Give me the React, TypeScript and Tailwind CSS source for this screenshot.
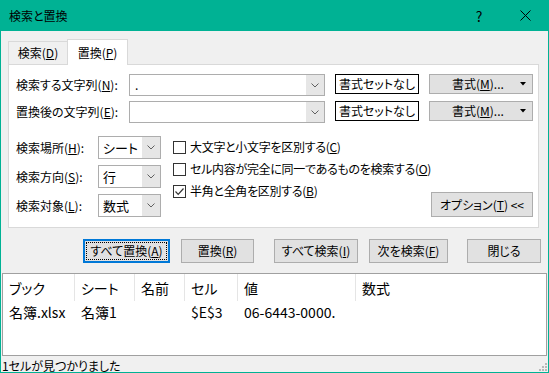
import React from "react";

const Chevron = () => (
  <svg width="8" height="5" viewBox="0 0 8 5">
    <polyline points="0.5,0.5 4,4 7.5,0.5" fill="none" stroke="#606060" strokeWidth="1" />
  </svg>
);

const Caret = () => (
  <svg width="6" height="4" viewBox="0 0 6 4">
    <polygon points="0,0 6,0 3,3.5" fill="#000" />
  </svg>
);

const Combo = ({ value }: { value: string }) => (
  <div className="w-[196px] h-[22px] border border-[#adadad] bg-white flex">
    <div className="flex-1 pl-[5px] flex items-center">{value}</div>
    <div className="w-[18px] bg-[#e6e6e6] flex items-center justify-center">
      <Chevron />
    </div>
  </div>
);

const Select = ({ value }: { value: string }) => (
  <div className="w-[63px] h-[23px] border border-[#adadad] bg-white flex">
    <div className="flex-1 pl-[4px] flex items-center text-[13px]">{value}</div>
    <div className="w-[18px] bg-[#e6e6e6] flex items-center justify-center">
      <Chevron />
    </div>
  </div>
);

const Checkbox = ({ checked, children }: { checked?: boolean; children: React.ReactNode }) => (
  <div className="h-[22px] flex items-center gap-[4px] whitespace-nowrap">
    <div className="w-[13px] h-[13px] shrink-0 border border-[#333] bg-white flex items-center justify-center">
      {checked && (
        <svg width="11" height="11" viewBox="0 0 11 11">
          <polyline points="1.5,5.5 4.2,8.3 9.5,2.5" fill="none" stroke="#333" strokeWidth="1.2" />
        </svg>
      )}
    </div>
    <span className="tracking-[-0.3px]">{children}</span>
  </div>
);

const Btn = ({ w, ml, children, primary }: { w: string; ml: string; children: React.ReactNode; primary?: boolean }) => (
  <div
    className={`${w} ${ml} h-[24px] flex items-center justify-center bg-[#e1e1e1] ${
      primary ? "border-2 border-[#0078d7] p-px" : "border border-[#adadad]"
    }`}
  >
    {primary ? (
      <div className="w-full h-full border border-dotted border-black flex items-center justify-center">{children}</div>
    ) : (
      children
    )}
  </div>
);

const Grip = () => (
  <svg width="8" height="8" viewBox="0 0 8 8">
    <rect x="6" y="0" width="2" height="2" fill="#b8b8b8" />
    <rect x="3" y="3" width="2" height="2" fill="#b8b8b8" />
    <rect x="6" y="3" width="2" height="2" fill="#b8b8b8" />
    <rect x="0" y="6" width="2" height="2" fill="#b8b8b8" />
    <rect x="3" y="6" width="2" height="2" fill="#b8b8b8" />
    <rect x="6" y="6" width="2" height="2" fill="#b8b8b8" />
  </svg>
);

const cols = [
  { w: "w-[72px]", head: "ブック", val: "名簿.xlsx" },
  { w: "w-[60px]", head: "シート", val: "名簿1" },
  { w: "w-[50px]", head: "名前", val: "" },
  { w: "w-[53px]", head: "セル", val: "$E$3" },
  { w: "w-[118px]", head: "値", val: "06-6443-0000." },
];

export default function App() {
  return (
    <div className="w-[549px] h-[373px] bg-[#f0f0f0] border-x border-b border-[#00b294] flex flex-col overflow-hidden text-[12px] text-black [font-family:'Noto_Sans_CJK_JP',sans-serif] [font-feature-settings:'palt'] leading-none">
      {/* title bar */}
      <div className="h-[31px] bg-[#00b294] flex items-center">
        <span className="pl-[8px] text-[12px]">検索と置換</span>
        <div className="ml-auto flex h-full">
          <div className="w-[46px] flex items-center justify-center text-[14px]">?</div>
          <div className="w-[46px] flex items-center justify-center">
            <svg width="11" height="11" viewBox="0 0 11 11">
              <path d="M0.5 0.5 L10.5 10.5 M10.5 0.5 L0.5 10.5" stroke="#000" strokeWidth="1" />
            </svg>
          </div>
        </div>
      </div>

      {/* tabs */}
      <div className="h-[33px] flex items-end pl-[7px]">
        <div className="w-[59px] h-[23px] border-t border-l border-[#d9d9d9] flex items-center justify-center">
          検索(<u>D</u>)
        </div>
        <div className="w-[61px] h-[26px] -mb-px border-t border-x border-[#d9d9d9] bg-white flex items-center justify-center z-10">
          置換(<u>P</u>)
        </div>
      </div>

      {/* panel */}
      <div className="ml-[7px] w-[531px] h-[164px] border border-[#d9d9d9] bg-white pl-[7px] pt-[9px] flex flex-col">
        <div className="flex items-start h-[22px]">
          <div className="w-[113px] h-[22px] flex items-center">
            検索する文字列(<u>N</u>):
          </div>
          <Combo value="." />
          <div className="ml-[10px] w-[84px] h-[20px] border border-black bg-white flex items-center justify-center">
            書式セットなし
          </div>
          <div className="ml-[10px] w-[104px] h-[20px] border border-[#adadad] bg-[#e1e1e1] flex items-center justify-between pl-[22px] pr-[6px]">
            <span>
              書式(<u>M</u>)...
            </span>
            <Caret />
          </div>
        </div>
        <div className="flex items-start h-[22px] mt-[5px]">
          <div className="w-[113px] h-[22px] flex items-center">
            置換後の文字列(<u>E</u>):
          </div>
          <Combo value="" />
          <div className="ml-[10px] w-[84px] h-[20px] border border-black bg-white flex items-center justify-center">
            書式セットなし
          </div>
          <div className="ml-[10px] w-[104px] h-[20px] border border-[#adadad] bg-[#e1e1e1] flex items-center justify-between pl-[22px] pr-[6px]">
            <span>
              書式(<u>M</u>)...
            </span>
            <Caret />
          </div>
        </div>

        <div className="flex mt-[13px]">
          <div className="flex flex-col gap-[6px]">
            <div className="flex items-center h-[23px]">
              <div className="w-[82px]">
                検索場所(<u>H</u>):
              </div>
              <Select value="シート" />
            </div>
            <div className="flex items-center h-[23px]">
              <div className="w-[82px]">
                検索方向(<u>S</u>):
              </div>
              <Select value="行" />
            </div>
            <div className="flex items-center h-[23px]">
              <div className="w-[82px]">
                検索対象(<u>L</u>):
              </div>
              <Select value="数式" />
            </div>
          </div>
          <div className="ml-[12px] w-[250px] shrink-0 flex flex-col">
            <Checkbox>
              大文字と小文字を区別する(<u>C</u>)
            </Checkbox>
            <Checkbox>
              セル内容が完全に同一であるものを検索する(<u>O</u>)
            </Checkbox>
            <Checkbox checked>
              半角と全角を区別する(<u>B</u>)
            </Checkbox>
          </div>
          <div className="ml-auto mr-[5px] self-end w-[102px] h-[25px] border border-[#adadad] bg-[#e1e1e1] flex items-center justify-center">
            オプション(<u>T</u>) &lt;&lt;
          </div>
        </div>
      </div>

      {/* buttons */}
      <div className="mt-[11px] flex">
        <Btn w="w-[87px]" ml="ml-[82px]" primary>
          すべて置換(<u>A</u>)
        </Btn>
        <Btn w="w-[73px]" ml="ml-[11px]">
          置換(<u>R</u>)
        </Btn>
        <Btn w="w-[84px]" ml="ml-[20px]">
          すべて検索(<u>I</u>)
        </Btn>
        <Btn w="w-[79px]" ml="ml-[11px]">
          次を検索(<u>F</u>)
        </Btn>
        <Btn w="w-[74px]" ml="ml-[19px]">
          閉じる
        </Btn>
      </div>

      {/* results */}
      <div className="mt-[10px] mx-px h-[83px] border border-[#a0a0a0] bg-white text-[14px]">
        <div className="h-[27px] flex">
          {cols.map((c) => (
            <div key={c.head} className={`${c.w} h-full border-r border-[#e5e5e5] pl-[6px] flex items-center`}>
              {c.head}
            </div>
          ))}
          <div className="flex-1 pl-[6px] flex items-center">数式</div>
        </div>
        <div className="h-[21px] flex">
          {cols.map((c) => (
            <div key={c.head} className={`${c.w} pl-[6px] flex items-center whitespace-nowrap`}>
              {c.val}
            </div>
          ))}
        </div>
      </div>

      {/* status */}
      <div className="flex-1 flex items-center pl-px pr-[1px]">
        <span className="pt-[3px]">1セルが見つかりました</span>
        <div className="ml-auto self-end mb-[1px]">
          <Grip />
        </div>
      </div>
    </div>
  );
}
